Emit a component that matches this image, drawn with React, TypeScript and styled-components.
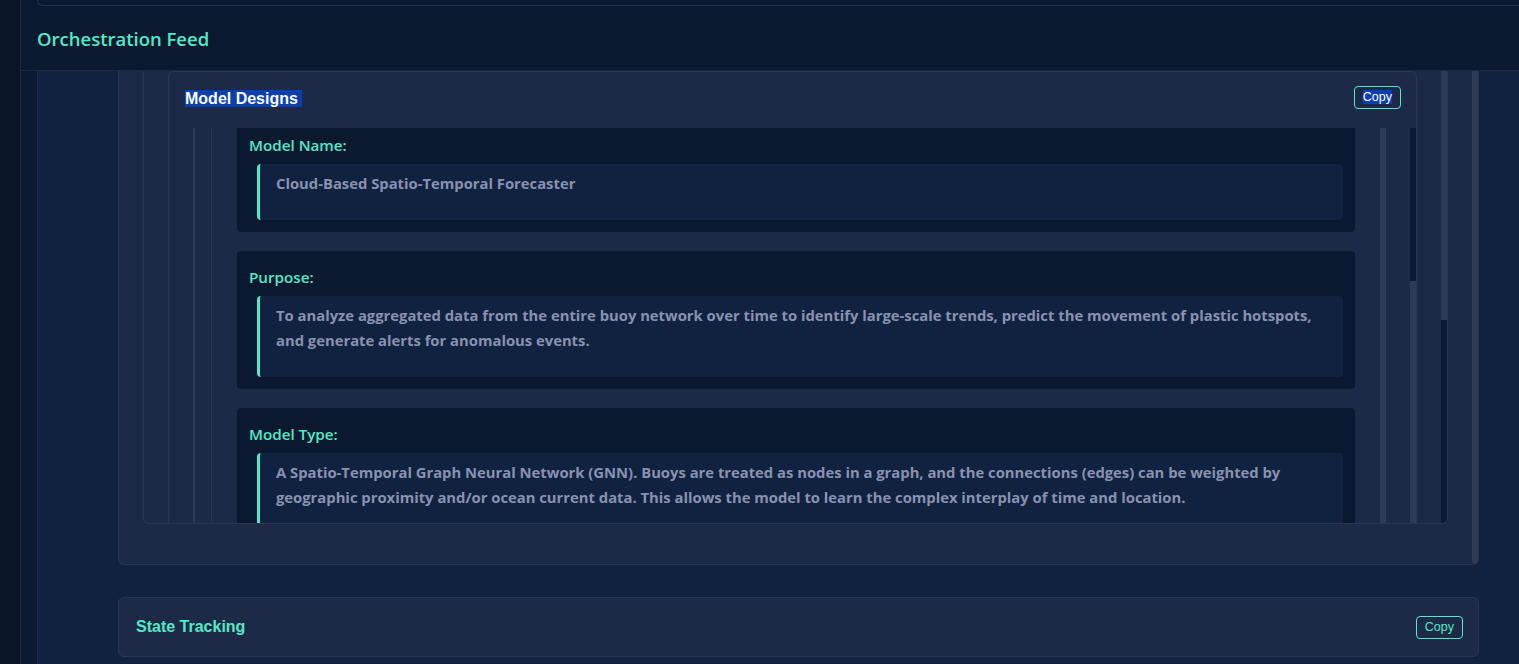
import { createGlobalStyle } from 'styled-components';
import styled from 'styled-components';

const GlobalStyle = createGlobalStyle`
  html, body {
    margin: 0;
    padding: 0;
    height: 100%;
    background: #0a1628;
    overflow: hidden;
  }
  #root {
    height: 100%;
  }
  * {
    box-sizing: border-box;
  }
`;

const fields = [
  {
    label: 'Model Name:',
    lines: ['Cloud-Based Spatio-Temporal Forecaster'],
  },
  {
    label: 'Purpose:',
    lines: [
      'To analyze aggregated data from the entire buoy network over time to identify large-scale trends, predict the movement of plastic hotspots,',
      'and generate alerts for anomalous events.',
    ],
  },
  {
    label: 'Model Type:',
    lines: [
      'A Spatio-Temporal Graph Neural Network (GNN). Buoys are treated as nodes in a graph, and the connections (edges) can be weighted by',
      'geographic proximity and/or ocean current data. This allows the model to learn the complex interplay of time and location.',
    ],
  },
];

const App = () => {
  return (
    <>
      <GlobalStyle />
      <Shell>
        <Rail />
        <Main>
          <TopStub>
            <PrevCardEdge />
          </TopStub>
          <FeedHeader>
            <FeedTitle>Orchestration Feed</FeedTitle>
          </FeedHeader>
          <FeedBody>
            <FeedPanel>
              <SectionCard>
                <SectionInner>
                  <ScrollFrame>
                    <FrameInner>
                      <DesignBlock>
                        <BlockHeader>
                          <BlockTitle>
                            <Selected>Model Designs&nbsp;</Selected>
                          </BlockTitle>
                          <HeaderCopy $selected>
                            <Selected>Copy</Selected>
                          </HeaderCopy>
                        </BlockHeader>
                        <BlockBody>
                          <Guide>
                            <Nest>
                              <FieldList>
                                {fields.map((f) => (
                                  <FieldCard key={f.label}>
                                    <FieldLabel>{f.label}</FieldLabel>
                                    <FieldValue>
                                      {f.lines.map((l, i) => (
                                        <ValueLine key={i}>{l}</ValueLine>
                                      ))}
                                    </FieldValue>
                                  </FieldCard>
                                ))}
                              </FieldList>
                            </Nest>
                            <Strip $thumb="full" />
                          </Guide>
                          <Strip $thumb="bottom" />
                        </BlockBody>
                      </DesignBlock>
                    </FrameInner>
                    <Strip $thumb="top" />
                  </ScrollFrame>
                </SectionInner>
                <Strip $thumb="full" $rounded />
              </SectionCard>

              <StateCard>
                <StateTitle>State Tracking</StateTitle>
                <CopyBtn>Copy</CopyBtn>
              </StateCard>
            </FeedPanel>
          </FeedBody>
        </Main>
      </Shell>
    </>
  );
};

export default App;

const teal = '#52e9c6';

const Shell = styled.div`
  display: flex;
  height: 100vh;
  overflow: hidden;
`;

const Rail = styled.div`
  width: 21px;
  flex-shrink: 0;
  background: #0a1628;
  border-right: 1px solid #1c2840;
`;

const Main = styled.div`
  flex: 1;
  display: flex;
  flex-direction: column;
  background: #0a192f;
  min-width: 0;
`;

const TopStub = styled.div`
  height: 6px;
  padding-left: 16px;
  flex-shrink: 0;
`;

const PrevCardEdge = styled.div`
  height: 6px;
  border: 1px solid #26324c;
  border-top: none;
  border-right: none;
  border-radius: 0 0 0 6px;
`;

const FeedHeader = styled.div`
  height: 65px;
  flex-shrink: 0;
  display: flex;
  align-items: center;
  padding: 1px 16px 0;
  border-bottom: 1px solid #1c2840;
`;

const FeedTitle = styled.h2`
  margin: 0;
  font-family: 'Open Sans', 'Noto Sans', sans-serif;
  font-weight: 600;
  font-size: 18.5px;
  color: ${teal};
`;

const FeedBody = styled.div`
  flex: 1;
  display: flex;
  padding-left: 16px;
  min-height: 0;
`;

const FeedPanel = styled.div`
  flex: 1;
  background: #112240;
  border-left: 1px solid #1f2c46;
  padding: 0 40px 0 80px;
  overflow: hidden;
`;

const SectionCard = styled.div`
  display: flex;
  background: #1d2a47;
  border: 1px solid #2a3651;
  border-top: none;
  border-radius: 0 0 6px 6px;
  overflow: hidden;
`;

const SectionInner = styled.div`
  flex: 1;
  padding: 0 24px 40px 24px;
  min-width: 0;
`;

const ScrollFrame = styled.div`
  display: flex;
  height: 453px;
  border: 1px solid #2a3651;
  border-top: none;
  border-radius: 0 0 6px 6px;
  overflow: hidden;
`;

const FrameInner = styled.div`
  flex: 1;
  padding: 0 24px;
  min-width: 0;
  overflow: hidden;
`;

const DesignBlock = styled.div`
  display: flex;
  flex-direction: column;
  height: 100%;
  border: 1px solid #2a3651;
  border-bottom: none;
  border-radius: 6px 6px 0 0;
`;

const BlockHeader = styled.div`
  height: 56px;
  flex-shrink: 0;
  display: flex;
  align-items: center;
  justify-content: space-between;
  padding: 0 15px 2px 16px;
`;

const BlockTitle = styled.h3`
  margin: 0;
  font-family: 'Liberation Sans', Arial, sans-serif;
  font-weight: 700;
  font-size: 16px;
  line-height: 18px;
  color: #ffffff;
`;

const Selected = styled.span`
  background: #0b3eae;
  color: #ffffff;
`;

const CopyBtn = styled.button<{ $selected?: boolean }>`
  font-family: 'Liberation Sans', Arial, sans-serif;
  font-size: 12.5px;
  line-height: 15px;
  padding: 3px 8px;
  background: transparent;
  color: ${(p) => (p.$selected ? '#ffffff' : teal)};
  border: 1px solid ${teal};
  border-radius: 4px;
  cursor: pointer;
`;

const HeaderCopy = styled(CopyBtn)`
  margin-bottom: 3px;
`;

const BlockBody = styled.div`
  flex: 1;
  display: flex;
  padding-left: 24px;
  gap: 24px;
  min-height: 0;
`;

const Guide = styled.div`
  flex: 1;
  display: flex;
  gap: 25px;
  border-left: 2px solid #2e3a56;
  padding-left: 16px;
  min-width: 0;
`;

const Nest = styled.div`
  flex: 1;
  border-left: 1px solid #2a3651;
  padding-left: 25px;
  overflow: hidden;
  min-width: 0;
`;

const FieldList = styled.div`
  display: flex;
  flex-direction: column;
  gap: 19px;
  margin-top: -9px;
`;

const FieldCard = styled.div`
  background: #0a192f;
  border-radius: 4px;
  padding: 16px 12px 12px;
`;

const FieldLabel = styled.div`
  font-family: 'Open Sans', 'Noto Sans', sans-serif;
  font-weight: 600;
  font-size: 15.2px;
  line-height: 20px;
  color: ${teal};
  margin-bottom: 9px;
`;

const FieldValue = styled.div`
  margin-left: 8px;
  background: #112240;
  border-left: 3px solid ${teal};
  border-radius: 4px;
  padding: 7px 16px 24px;
`;

const ValueLine = styled.div`
  font-family: 'Open Sans', 'Noto Sans', sans-serif;
  font-weight: 700;
  font-size: 14.8px;
  line-height: 25px;
  color: #8892b0;
  white-space: nowrap;
`;

const Strip = styled.div<{ $thumb: 'full' | 'top' | 'bottom'; $rounded?: boolean }>`
  width: 6px;
  flex-shrink: 0;
  border-radius: ${(p) => (p.$rounded ? '0 0 3px 3px' : '0')};
  background: ${(p) =>
    p.$thumb === 'full'
      ? '#2e3a56'
      : p.$thumb === 'top'
        ? 'linear-gradient(#2e3a56 0 249px, #0d1a33 249px)'
        : 'linear-gradient(#0d1a33 0 153px, #2e3a56 153px)'};
`;

const StateCard = styled.div`
  margin-top: 32px;
  height: 60px;
  display: flex;
  align-items: center;
  justify-content: space-between;
  padding: 0 15px 0 17px;
  background: #1d2a47;
  border: 1px solid #2a3651;
  border-radius: 6px;
`;

const StateTitle = styled.h3`
  margin: 0;
  font-family: 'Liberation Sans', Arial, sans-serif;
  font-weight: 700;
  font-size: 16px;
  color: ${teal};
`;
